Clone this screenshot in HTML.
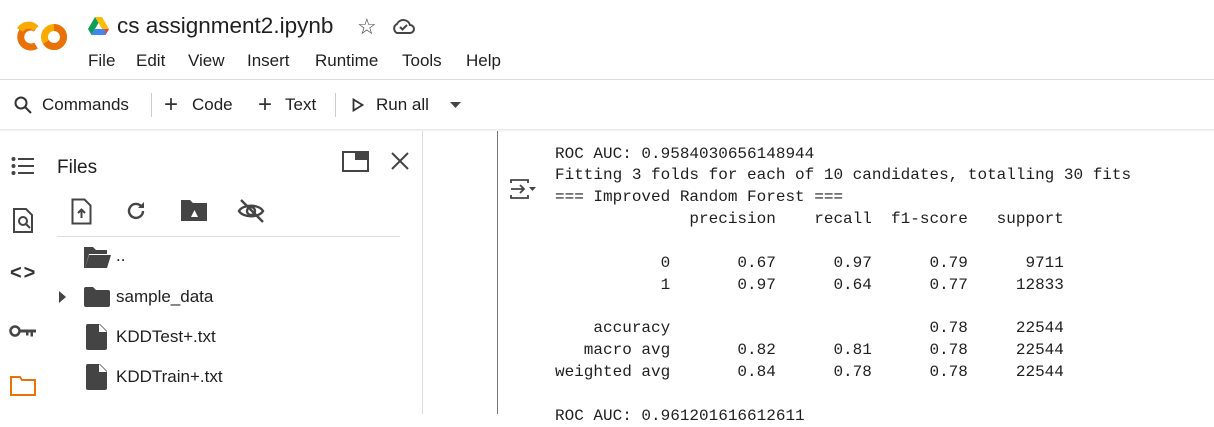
<!DOCTYPE html>
<html><head><style>
*{margin:0;padding:0;box-sizing:border-box}
body{width:1214px;height:414px;overflow:hidden;background:#fff;font-family:"Liberation Sans",sans-serif;color:#1f1f1f;position:relative}
.a{position:absolute}
pre{font-family:"Liberation Mono",monospace;font-size:16px;line-height:21.85px;color:#1f1f1f}
</style></head><body>
<!-- logo -->
<svg class="a" style="left:14px;top:20px" width="56" height="34" viewBox="0 0 56 34">
<path d="M22 8.5A10 10 0 1 0 22 25.5" fill="none" stroke="#E8710A" stroke-width="7"/>
<path d="M22 8.5A10 10 0 0 0 6 10" fill="none" stroke="#F9AB00" stroke-width="7"/>
<circle cx="40" cy="17" r="9.5" fill="none" stroke="#F9AB00" stroke-width="7"/>
<path d="M40 7.5A9.5 9.5 0 0 1 40 26.5A9.5 9.5 0 0 1 32 22" fill="none" stroke="#E8710A" stroke-width="7"/>
</svg>
<svg class="a" style="left:88px;top:17px" width="21" height="18" viewBox="0 0 21 18"><path d="M7 0h7l7 12h-7z" fill="#FBBC04"/><path d="M7 0l3.5 6L3.5 18 0 12z" fill="#0F9D58"/><path d="M3.5 18l3.5-6h14l-3.5 6z" fill="#4285F4"/><path d="M17.5 18l3.5-6h-4z" fill="#EA4335"/></svg>
<div class="a" style="left:117px;top:13px;font-size:22.5px;color:#1f1f1f">cs assignment2.ipynb</div>
<div class="a" style="left:357px;top:14px;font-size:22px;color:#444">☆</div>
<svg class="a" style="left:391px;top:17px" width="24" height="18" viewBox="0 0 24 18"><path d="M6 16h13a4 4 0 0 0 0-8 7 7 0 0 0-13-1 5 5 0 0 0 0 9z" fill="none" stroke="#444" stroke-width="2"/><path d="M9 10l2.5 2.5L16 8" fill="none" stroke="#444" stroke-width="2"/></svg>
<div class="a" style="top:51px;font-size:17px;left:0">
<span class="a" style="left:88px">File</span><span class="a" style="left:136px">Edit</span><span class="a" style="left:188px">View</span><span class="a" style="left:247px">Insert</span><span class="a" style="left:315px">Runtime</span><span class="a" style="left:402px">Tools</span><span class="a" style="left:466px">Help</span></div>
<div class="a" style="left:0;top:79px;width:1214px;height:1px;background:#dadce0"></div>
<!-- toolbar -->
<svg class="a" style="left:14px;top:96px" width="18" height="18" viewBox="0 0 18 18"><circle cx="7" cy="7" r="5.5" fill="none" stroke="#333" stroke-width="2"/><path d="M11 11l6 6" stroke="#333" stroke-width="2"/></svg>
<div class="a" style="left:42px;top:95px;font-size:17px">Commands</div>
<div class="a" style="left:151px;top:93px;width:1px;height:24px;background:#ccc"></div>
<div class="a" style="left:164px;top:91px;font-size:24px;color:#333">+</div>
<div class="a" style="left:192px;top:95px;font-size:17px">Code</div>
<div class="a" style="left:258px;top:91px;font-size:24px;color:#333">+</div>
<div class="a" style="left:285px;top:95px;font-size:17px">Text</div>
<div class="a" style="left:335px;top:93px;width:1px;height:24px;background:#ccc"></div>
<svg class="a" style="left:352px;top:98px" width="12" height="14" viewBox="0 0 12 14"><path d="M1.5 1.5v11l9-5.5z" fill="none" stroke="#333" stroke-width="1.8"/></svg>
<div class="a" style="left:376px;top:95px;font-size:17px">Run all</div>
<svg class="a" style="left:450px;top:102px" width="11" height="6"><path d="M0 0h11L5.5 6z" fill="#444"/></svg>
<div class="a" style="left:0;top:129px;width:1214px;height:3px;background:linear-gradient(#e4e4e4,#fff)"></div>
<!-- left rail -->
<svg class="a" style="left:11px;top:156px" width="24" height="20" viewBox="0 0 24 20"><g fill="#444"><circle cx="2.5" cy="3" r="2"/><circle cx="2.5" cy="10" r="2"/><circle cx="2.5" cy="17" r="2"/><rect x="7" y="2" width="16" height="2"/><rect x="7" y="9" width="16" height="2"/><rect x="7" y="16" width="16" height="2"/></g></svg>
<svg class="a" style="left:12px;top:208px" width="22" height="26" viewBox="0 0 22 26"><path d="M2 1h12l6 6v17H2z" fill="none" stroke="#444" stroke-width="2"/><circle cx="11" cy="13" r="4" fill="none" stroke="#444" stroke-width="2"/><path d="M14 16l4 4" stroke="#444" stroke-width="2"/></svg>
<div class="a" style="left:10px;top:262px;font-size:20px;color:#333;font-weight:bold;letter-spacing:2px">&lt;&gt;</div>
<svg class="a" style="left:9px;top:324px" width="28" height="14" viewBox="0 0 28 14"><circle cx="6" cy="7" r="4.5" fill="none" stroke="#444" stroke-width="2.5"/><path d="M10 5.5h17v3h-3v4h-2.5v-4h-2v3h-2.5v-3H10z" fill="#444"/></svg>
<svg class="a" style="left:10px;top:376px" width="26" height="20" viewBox="0 0 26 20"><path d="M1 1h9l2 3h13v15H1z" fill="none" stroke="#E8710A" stroke-width="2"/></svg>
<!-- files panel -->
<div class="a" style="left:57px;top:157px;font-size:19px">Files</div>
<svg class="a" style="left:342px;top:151px" width="27" height="21"><rect x="1" y="1" width="25" height="19" fill="none" stroke="#444" stroke-width="2"/><rect x="13" y="1" width="13" height="8" fill="#444"/></svg>
<svg class="a" style="left:391px;top:152px" width="18" height="18"><path d="M1 1l16 16M17 1L1 17" stroke="#444" stroke-width="2"/></svg>
<svg class="a" style="left:71px;top:198px" width="22" height="27" viewBox="0 0 22 27"><path d="M1.5 1.5h12l6 6v18h-18z" fill="none" stroke="#444" stroke-width="2"/><path d="M10.5 20v-8M7 15l3.5-3.5 3.5 3.5" fill="none" stroke="#444" stroke-width="2"/></svg>
<svg class="a" style="left:125px;top:200px" width="22" height="22" viewBox="0 0 22 22"><path d="M18 11a7 7 0 1 1-2-5" fill="none" stroke="#444" stroke-width="2.4"/><path d="M19 2v6h-6z" fill="#444"/></svg>
<svg class="a" style="left:181px;top:200px" width="26" height="21" viewBox="0 0 26 21"><path d="M0 0h9l3 3h14v18H0z" fill="#444"/><path d="M10 17l3.5-7 3.5 7z" fill="#fff"/></svg>
<svg class="a" style="left:237px;top:198px" width="28" height="26" viewBox="0 0 28 26"><path d="M2 13c4-7 20-7 24 0-4 7-20 7-24 0z" fill="none" stroke="#444" stroke-width="2.4"/><circle cx="14" cy="13" r="4" fill="none" stroke="#444" stroke-width="2.4"/><path d="M4 2l22 22" stroke="#444" stroke-width="2.4"/></svg>
<div class="a" style="left:57px;top:236px;width:343px;height:1px;background:#ddd"></div>
<svg class="a" style="left:84px;top:247px" width="27" height="21" viewBox="0 0 27 21"><path d="M0 0h9l3 3h11v4H5L1 21H0z" fill="#444"/><path d="M5 8h22l-4 13H1z" fill="#444"/></svg>
<div class="a" style="left:116px;top:246px;font-size:17px">..</div>
<svg class="a" style="left:59px;top:291px" width="7" height="12"><path d="M0 0l7 6-7 6z" fill="#444"/></svg>
<svg class="a" style="left:84px;top:287px" width="26" height="20" viewBox="0 0 26 20"><path d="M0 2a2 2 0 0 1 2-2h7l3 3h12a2 2 0 0 1 2 2v13a2 2 0 0 1-2 2H2a2 2 0 0 1-2-2z" fill="#444"/></svg>
<div class="a" style="left:116px;top:287px;font-size:17px">sample_data</div>
<svg class="a" style="left:86px;top:324px" width="21" height="26" viewBox="0 0 21 26"><path d="M2 0h12l7 7v17a2 2 0 0 1-2 2H2a2 2 0 0 1-2-2V2a2 2 0 0 1 2-2z" fill="#444"/><path d="M13 0v8h8" fill="#fff"/></svg>
<div class="a" style="left:116px;top:327px;font-size:17px">KDDTest+.txt</div>
<svg class="a" style="left:86px;top:364px" width="21" height="26" viewBox="0 0 21 26"><path d="M2 0h12l7 7v17a2 2 0 0 1-2 2H2a2 2 0 0 1-2-2V2a2 2 0 0 1 2-2z" fill="#444"/><path d="M13 0v8h8" fill="#fff"/></svg>
<div class="a" style="left:116px;top:367px;font-size:17px">KDDTrain+.txt</div>
<div class="a" style="left:422px;top:131px;width:1px;height:283px;background:#ddd"></div>
<div class="a" style="left:497px;top:131px;width:1px;height:283px;background:#777"></div>
<svg class="a" style="left:510px;top:178px" width="26" height="22" viewBox="0 0 26 22"><path d="M1 5V2h17v3M1 17v3h17v-3M1 11h13M10 7l4 4-4 4" fill="none" stroke="#444" stroke-width="1.8"/><path d="M19 9h7l-3.5 4z" fill="#444"/></svg>
<pre class="a" style="left:555px;top:143.5px">ROC AUC: 0.9584030656148944
Fitting 3 folds for each of 10 candidates, totalling 30 fits
=== Improved Random Forest ===
              precision    recall  f1-score   support

           0       0.67      0.97      0.79      9711
           1       0.97      0.64      0.77     12833

    accuracy                           0.78     22544
   macro avg       0.82      0.81      0.78     22544
weighted avg       0.84      0.78      0.78     22544

ROC AUC: 0.961201616612611</pre>
</body></html>
